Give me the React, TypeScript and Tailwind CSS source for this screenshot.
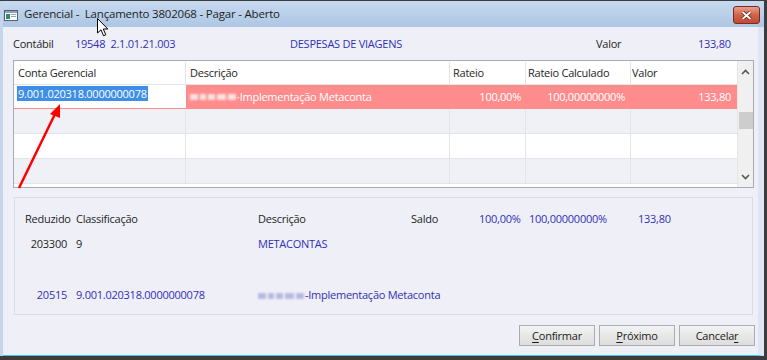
import React from "react";

const blue = "text-[#2f2fb9]";

function Blur({ tone }: { tone: "light" | "purple" }) {
  const c = tone === "light" ? "bg-[#fde2e2]" : "bg-[#b9b9e3]";
  return (
    <span className="mr-[1px] inline-flex items-center gap-[2px] align-middle blur-[1px]">
      <span className={`inline-block h-[6px] w-[8px] ${c}`} />
      <span className={`inline-block h-[6px] w-[6px] ${c}`} />
      <span className={`inline-block h-[6px] w-[7px] ${c}`} />
      <span className={`inline-block h-[6px] w-[9px] ${c}`} />
      <span className={`inline-block h-[6px] w-[8px] ${c}`} />
    </span>
  );
}

function Btn({ pre, u, post }: { pre?: string; u: string; post?: string }) {
  return (
    <button
      type="button"
      className="h-[21px] w-[76px] border border-[#adadad] bg-gradient-to-b from-[#f3f3f3] to-[#dddddd] text-[11px] leading-none text-[#1a1a1a]"
    >
      {pre}
      <span className="underline underline-offset-2">{u}</span>
      {post}
    </button>
  );
}

function GridRow({ bg, children }: { bg: string; children?: React.ReactNode }) {
  return (
    <div className={`grid h-[25px] grid-cols-[172px_264px_76px_105px_106px] border-b border-[#e3e4e9] ${bg}`}>
      {children ?? (
        <>
          <div className="border-r border-[#e3e4e9]" />
          <div className="border-r border-[#e3e4e9]" />
          <div className="border-r border-[#e3e4e9]" />
          <div className="border-r border-[#e3e4e9]" />
          <div />
        </>
      )}
    </div>
  );
}

export default function App() {
  return (
    <div className="relative flex h-[360px] w-[767px] flex-col overflow-hidden bg-[#3c3c3c] pt-[1px] font-['Open_Sans','Noto_Sans',sans-serif] text-[11px] tracking-[-0.25px] text-[#1e1e1e]">
      <div className="flex h-[355px] w-[764px] flex-col border-l-[3px] border-[#c4d6ec]">
        {/* title bar */}
        <div className="flex h-[26px] shrink-0 items-start bg-gradient-to-b from-[#c7daef] to-[#adc6e3]">
          <svg width="14" height="11" viewBox="0 0 14 11" className="ml-[1px] mt-[9px]">
            <rect x="0.5" y="0.5" width="13" height="10" fill="#fff" stroke="#55606e" />
            <rect x="1" y="1" width="12" height="2" fill="#8da2bb" />
            <rect x="2" y="4" width="4" height="5" fill="#2f8f6a" />
            <rect x="7" y="4" width="5" height="1" fill="#9aa6b4" />
            <rect x="7" y="6" width="5" height="1" fill="#9aa6b4" />
          </svg>
          <span className="ml-[6px] mt-[5px] whitespace-pre text-[11.5px] leading-[16px] tracking-[-0.2px] text-[#1e1e1e]">
            {"Gerencial -  Lançamento 3802068 - Pagar - Aberto"}
          </span>
          <div className="ml-auto mr-[4px] mt-[5px] flex h-[18px] w-[27px] items-center justify-center rounded-[3px] border border-[#7a2a1e] bg-gradient-to-b from-[#e7a08f] via-[#d2614a] to-[#c24a34]">
            <svg width="11" height="9" viewBox="0 0 11 9">
              <path d="M1.5 1 L9.5 8 M9.5 1 L1.5 8" stroke="#5a1a10" strokeWidth="3.4" />
              <path d="M1.5 1 L9.5 8 M9.5 1 L1.5 8" stroke="#ffffff" strokeWidth="2" />
            </svg>
          </div>
        </div>

        {/* body */}
        <div className="flex flex-1 flex-col border-b border-r-[6px] border-b-[#3ec4e4] border-r-[#dfe5f2] bg-[#eff0f7] pl-[10px]">
          <div className="mt-[9px] grid h-[16px] grid-cols-[62px_215px_306px_102px_auto] items-center leading-[16px]">
            <span>Contábil</span>
            <span className={`whitespace-pre ${blue}`}>{"19548  2.1.01.21.003"}</span>
            <span className={blue}>DESPESAS DE VIAGENS</span>
            <span>Valor</span>
            <span className={blue}>133,80</span>
          </div>

          {/* grid */}
          <div className="mt-[8px] flex h-[128px] w-[741px] border border-[#a9abb2] bg-white">
            <div className="flex w-[723px] flex-col">
              <div className="grid h-[24px] grid-cols-[172px_264px_76px_105px_106px] items-center border-b border-[#e3e4e9] leading-[22px]">
                <div className="border-r border-[#e3e4e9] pl-[4px]">Conta Gerencial</div>
                <div className="border-r border-[#e3e4e9] pl-[4px]">Descrição</div>
                <div className="border-r border-[#e3e4e9] pl-[3px]">Rateio</div>
                <div className="border-r border-[#e3e4e9] pl-[2px]">Rateio Calculado</div>
                <div className="pl-[1px]">Valor</div>
              </div>
              <div className="grid h-[24px] grid-cols-[172px_264px_76px_105px_106px] bg-[#ff8c8c] text-white">
                <div className="h-[23px] bg-white pl-[3px] pt-[1px]">
                  <span className="bg-[#3d8ee6] px-[1px] leading-[14px]">9.001.020318.0000000078</span>
                </div>
                <div className="flex items-center pl-[4px]">
                  <Blur tone="light" />
                  <span>·Implementação Metaconta</span>
                </div>
                <div className="flex items-center justify-end pr-[5px]">100,00%</div>
                <div className="flex items-center justify-end pr-[6px]">100,00000000%</div>
                <div className="flex items-center justify-end pr-[6px]">133,80</div>
              </div>
              <GridRow bg="bg-[#f0f1f6]" />
              <GridRow bg="bg-white" />
              <GridRow bg="bg-[#f0f1f6]" />
            </div>
            {/* scrollbar */}
            <div className="flex w-[16px] flex-col items-center border-l border-[#e6e6e6] bg-[#f0f0f0]">
              <svg width="9" height="6" viewBox="0 0 9 6" className="mt-[8px]">
                <path d="M1 5 L4.5 1.5 L8 5" fill="none" stroke="#555" strokeWidth="1.6" />
              </svg>
              <div className="mt-[37px] h-[17px] w-[14px] bg-[#cdcdcd]" />
              <svg width="9" height="6" viewBox="0 0 9 6" className="mt-[45px]">
                <path d="M1 1 L4.5 4.5 L8 1" fill="none" stroke="#555" strokeWidth="1.6" />
              </svg>
            </div>
          </div>

          {/* details panel */}
          <div className="ml-[1px] mt-[9px] h-[118px] w-[739px] border border-[#d9dce3] leading-[16px]">
            <div className="mt-[13px] grid grid-cols-[61px_182px_153px_68px_50px_109px_1fr]">
              <span className="pl-[10px]">Reduzido</span>
              <span>Classificação</span>
              <span>Descrição</span>
              <span>Saldo</span>
              <span className={blue}>100,00%</span>
              <span className={blue}>100,00000000%</span>
              <span className={blue}>133,80</span>
            </div>
            <div className="mt-[9px] grid grid-cols-[61px_182px_153px_68px_50px_109px_1fr]">
              <span className="pr-[9px] text-right">203300</span>
              <span>9</span>
              <span className={blue}>METACONTAS</span>
            </div>
            <div className="mt-[35px] grid grid-cols-[61px_182px_1fr]">
              <span className={`pr-[9px] text-right ${blue}`}>20515</span>
              <span className={blue}>9.001.020318.0000000078</span>
              <span className={blue}>
                <Blur tone="purple" />
                -Implementação Metaconta
              </span>
            </div>
          </div>

          <div className="mt-[10px] flex w-[742px] justify-end gap-[4px]">
            <Btn u="C" post="onfirmar" />
            <Btn u="P" post="róximo" />
            <Btn pre="Cancela" u="r" />
          </div>
        </div>
      </div>

      {/* red annotation arrow */}
      <svg className="pointer-events-none absolute left-0 top-0" width="767" height="360">
        <line x1="19" y1="188" x2="55" y2="114" stroke="#ff0000" strokeWidth="2.5" />
        <polygon points="60,104 50,114 60,118" fill="#ff0000" />
      </svg>

      {/* mouse cursor */}
      <svg className="pointer-events-none absolute left-[97px] top-[18px]" width="13" height="20" viewBox="0 0 13 20">
        <path d="M0.5 0.5 L0.5 15 L4 11.8 L6.6 17.8 L8.8 16.8 L6.3 11 L10.8 11 Z" fill="#fff" stroke="#000" strokeWidth="1" />
      </svg>
    </div>
  );
}
